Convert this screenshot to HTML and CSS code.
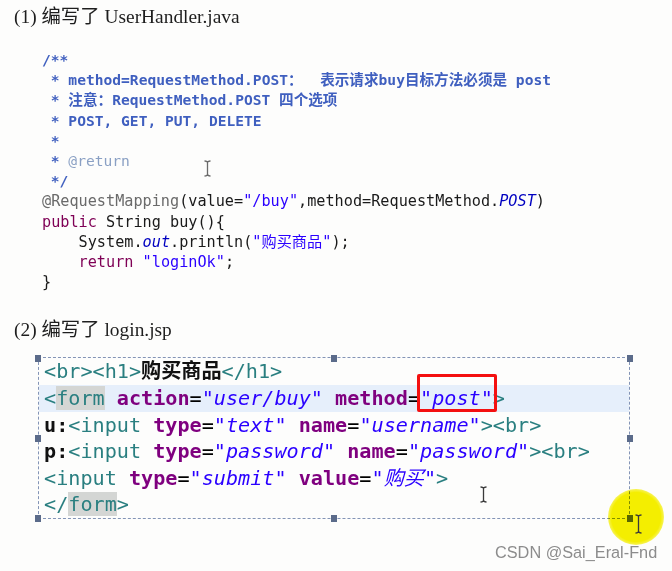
FILE: index.html
```html
<!DOCTYPE html>
<html lang="zh-CN">
<head>
    <meta charset="UTF-8">
    <title>编写了 UserHandler.java</title>
    <link rel="stylesheet" href="styles.css">
</head>
<body>
    <div class="page">
        <h2 class="step">(1) 编写了 UserHandler.java</h2>
        <div class="java">
            <div class="jl doc">/**</div>
            <div class="jl doc"> * method=RequestMethod.POST：  表示请求buy目标方法必须是 post</div>
            <div class="jl doc"> * 注意：RequestMethod.POST 四个选项</div>
            <div class="jl doc"> * POST, GET, PUT, DELETE</div>
            <div class="jl doc"> *</div>
            <div class="jl doc"> * <span class="doc-tag">@return</span></div>
            <div class="jl doc"> */</div>
            <div class="jl"><span class="anno">@RequestMapping</span>(value=<span class="str">"/buy"</span>,method=RequestMethod.<span class="field">POST</span>)</div>
            <div class="jl"><span class="kw">public</span> String buy(){</div>
            <div class="jl">    System.<span class="field">out</span>.println(<span class="str">"购买商品"</span>);</div>
            <div class="jl">    <span class="kw">return</span> <span class="str">"loginOk"</span>;</div>
            <div class="jl">}</div>
        </div>

        <h2 class="step step-2">(2) 编写了 login.jsp</h2>
        <div class="jsp">
            <div class="line"><span class="tag">&lt;br&gt;&lt;h1&gt;</span><span class="txt">购买商品</span><span class="tag">&lt;/h1&gt;</span></div>
            <div class="line current"><span class="tag">&lt;<span class="occ">form</span></span> <span class="attr">action</span>=<span class="val">"user/buy"</span> <span class="attr">method</span>=<span class="val boxed">"post"</span><span class="tag">&gt;</span></div>
            <div class="line"><span class="txt">u:</span><span class="tag">&lt;input</span> <span class="attr">type</span>=<span class="val">"text"</span> <span class="attr">name</span>=<span class="val">"username"</span><span class="tag">&gt;&lt;br&gt;</span></div>
            <div class="line"><span class="txt">p:</span><span class="tag">&lt;input</span> <span class="attr">type</span>=<span class="val">"password"</span> <span class="attr">name</span>=<span class="val">"password"</span><span class="tag">&gt;&lt;br&gt;</span></div>
            <div class="line"><span class="tag">&lt;input</span> <span class="attr">type</span>=<span class="val">"submit"</span> <span class="attr">value</span>=<span class="val">"购买"</span><span class="tag">&gt;</span></div>
            <div class="line"><span class="tag">&lt;/<span class="occ">form</span>&gt;</span></div>

            <span class="handle h-tl"></span>
            <span class="handle h-tm"></span>
            <span class="handle h-tr"></span>
            <span class="handle h-ml"></span>
            <span class="handle h-mr"></span>
            <span class="handle h-bl"></span>
            <span class="handle h-bm"></span>
            <span class="handle h-br"></span>
        </div>

        <!-- mouse pointer highlight and I-beam cursors -->
        <span class="spot"></span>
        <svg class="ibeam ib-1" width="9" height="17" viewBox="0 0 9 17"><path d="M1.5 1Q4.5 1 4.5 3Q4.5 1 7.5 1M4.5 3V14M1.5 16Q4.5 16 4.5 14Q4.5 16 7.5 16"/></svg>
        <svg class="ibeam ib-2" width="9" height="17" viewBox="0 0 9 17"><path d="M1.5 1Q4.5 1 4.5 3Q4.5 1 7.5 1M4.5 3V14M1.5 16Q4.5 16 4.5 14Q4.5 16 7.5 16"/></svg>
        <svg class="ibeam ib-3" width="9" height="20" viewBox="0 0 9 20"><path d="M1.5 1Q4.5 1 4.5 3Q4.5 1 7.5 1M4.5 3V17M1.5 19Q4.5 19 4.5 17Q4.5 19 7.5 19"/></svg>

        <div class="watermark">CSDN @Sai_Eral-Fnd</div>
    </div>
</body>
</html>
```

FILE: styles.css
```css
body {
    margin: 0;
    background-color: #fdfdfc;
}
.page {
    position: relative;
    width: 672px;
    height: 571px;
    overflow: hidden;
}
.step {
    margin: 0 0 0 14px;
    padding-top: 5px;
    font: normal 19.4px/24px "Liberation Serif", "Noto Sans CJK SC", serif;
    color: #1e1e1e;
}
.step-2 {
    margin-top: 20.6px;
}

/* java source */
.java {
    margin: 21px 0 0 42px;
    font: 15.2px/20.2px "DejaVu Sans Mono", "Noto Sans CJK SC", monospace;
    color: #1a1a1a;
}
.jl {
    height: 20.2px;
    white-space: pre;
}
.doc {
    font-size: 14.6px;
    color: #3f5fbf;
    font-weight: bold;
}
.doc-tag {
    color: #8aa0c4;
    font-weight: normal;
}
.anno {
    color: #6a6a6a;
}
.kw {
    color: #7f0055;
}
.str {
    color: #2a00ff;
}
.field {
    color: #0000c0;
    font-style: italic;
}

/* jsp source */
.jsp {
    position: relative;
    box-sizing: border-box;
    width: 592px;
    margin: 15.5px 0 0 38px;
    border: 1px dashed #8394b6;
    font: 20.15px/26.6px "DejaVu Sans Mono", "Noto Sans CJK SC", monospace;
}
.line {
    height: 26.6px;
    padding-left: 5px;
    white-space: pre;
}
.line.current {
    background-color: #e6effb;
}
.tag {
    color: #2a7f80;
}
.txt {
    color: #111;
    font-weight: bold;
}
.attr {
    color: #7f007f;
    font-weight: bold;
}
.val {
    color: #2a00ff;
    font-style: italic;
}
.occ {
    background-color: #d4d6d4;
}
.boxed {
    position: relative;
}
.boxed::after {
    content: "";
    position: absolute;
    top: -12px;
    bottom: -2px;
    left: -3px;
    right: -4px;
    border: 3px solid #f41010;
    border-radius: 2px;
}
.handle {
    position: absolute;
    width: 6px;
    height: 7px;
    background-color: #5b6b8a;
}
.h-tl { left: -4px; top: -3px; }
.h-tm { left: calc(50% - 3px); top: -3px; }
.h-tr { right: -4px; top: -3px; }
.h-ml { left: -4px; top: calc(50% - 3px); }
.h-mr { right: -4px; top: calc(50% - 3px); }
.h-bl { left: -4px; bottom: -4px; }
.h-bm { left: calc(50% - 3px); bottom: -4px; }
.h-br { right: -4px; bottom: -4px; }

.spot {
    position: absolute;
    left: 608px;
    top: 489px;
    width: 56px;
    height: 56px;
    border-radius: 50%;
    background: radial-gradient(circle, #f6f000 62%, rgba(246, 240, 0, 0.6) 72%, rgba(246, 240, 0, 0) 74%);
    mix-blend-mode: multiply;
}
.ibeam {
    position: absolute;
    fill: none;
    stroke: #3a3a3a;
    stroke-width: 1.3;
}
.ib-1 { left: 203px; top: 160px; stroke: #6a6a6a; }
.ib-2 { left: 479px; top: 486px; }
.ib-3 { left: 634px; top: 514px; }

.watermark {
    position: absolute;
    left: 495px;
    top: 543px;
    font: 16.3px "Liberation Sans", "Noto Sans", sans-serif;
    color: #8c8c8c;
}
```
